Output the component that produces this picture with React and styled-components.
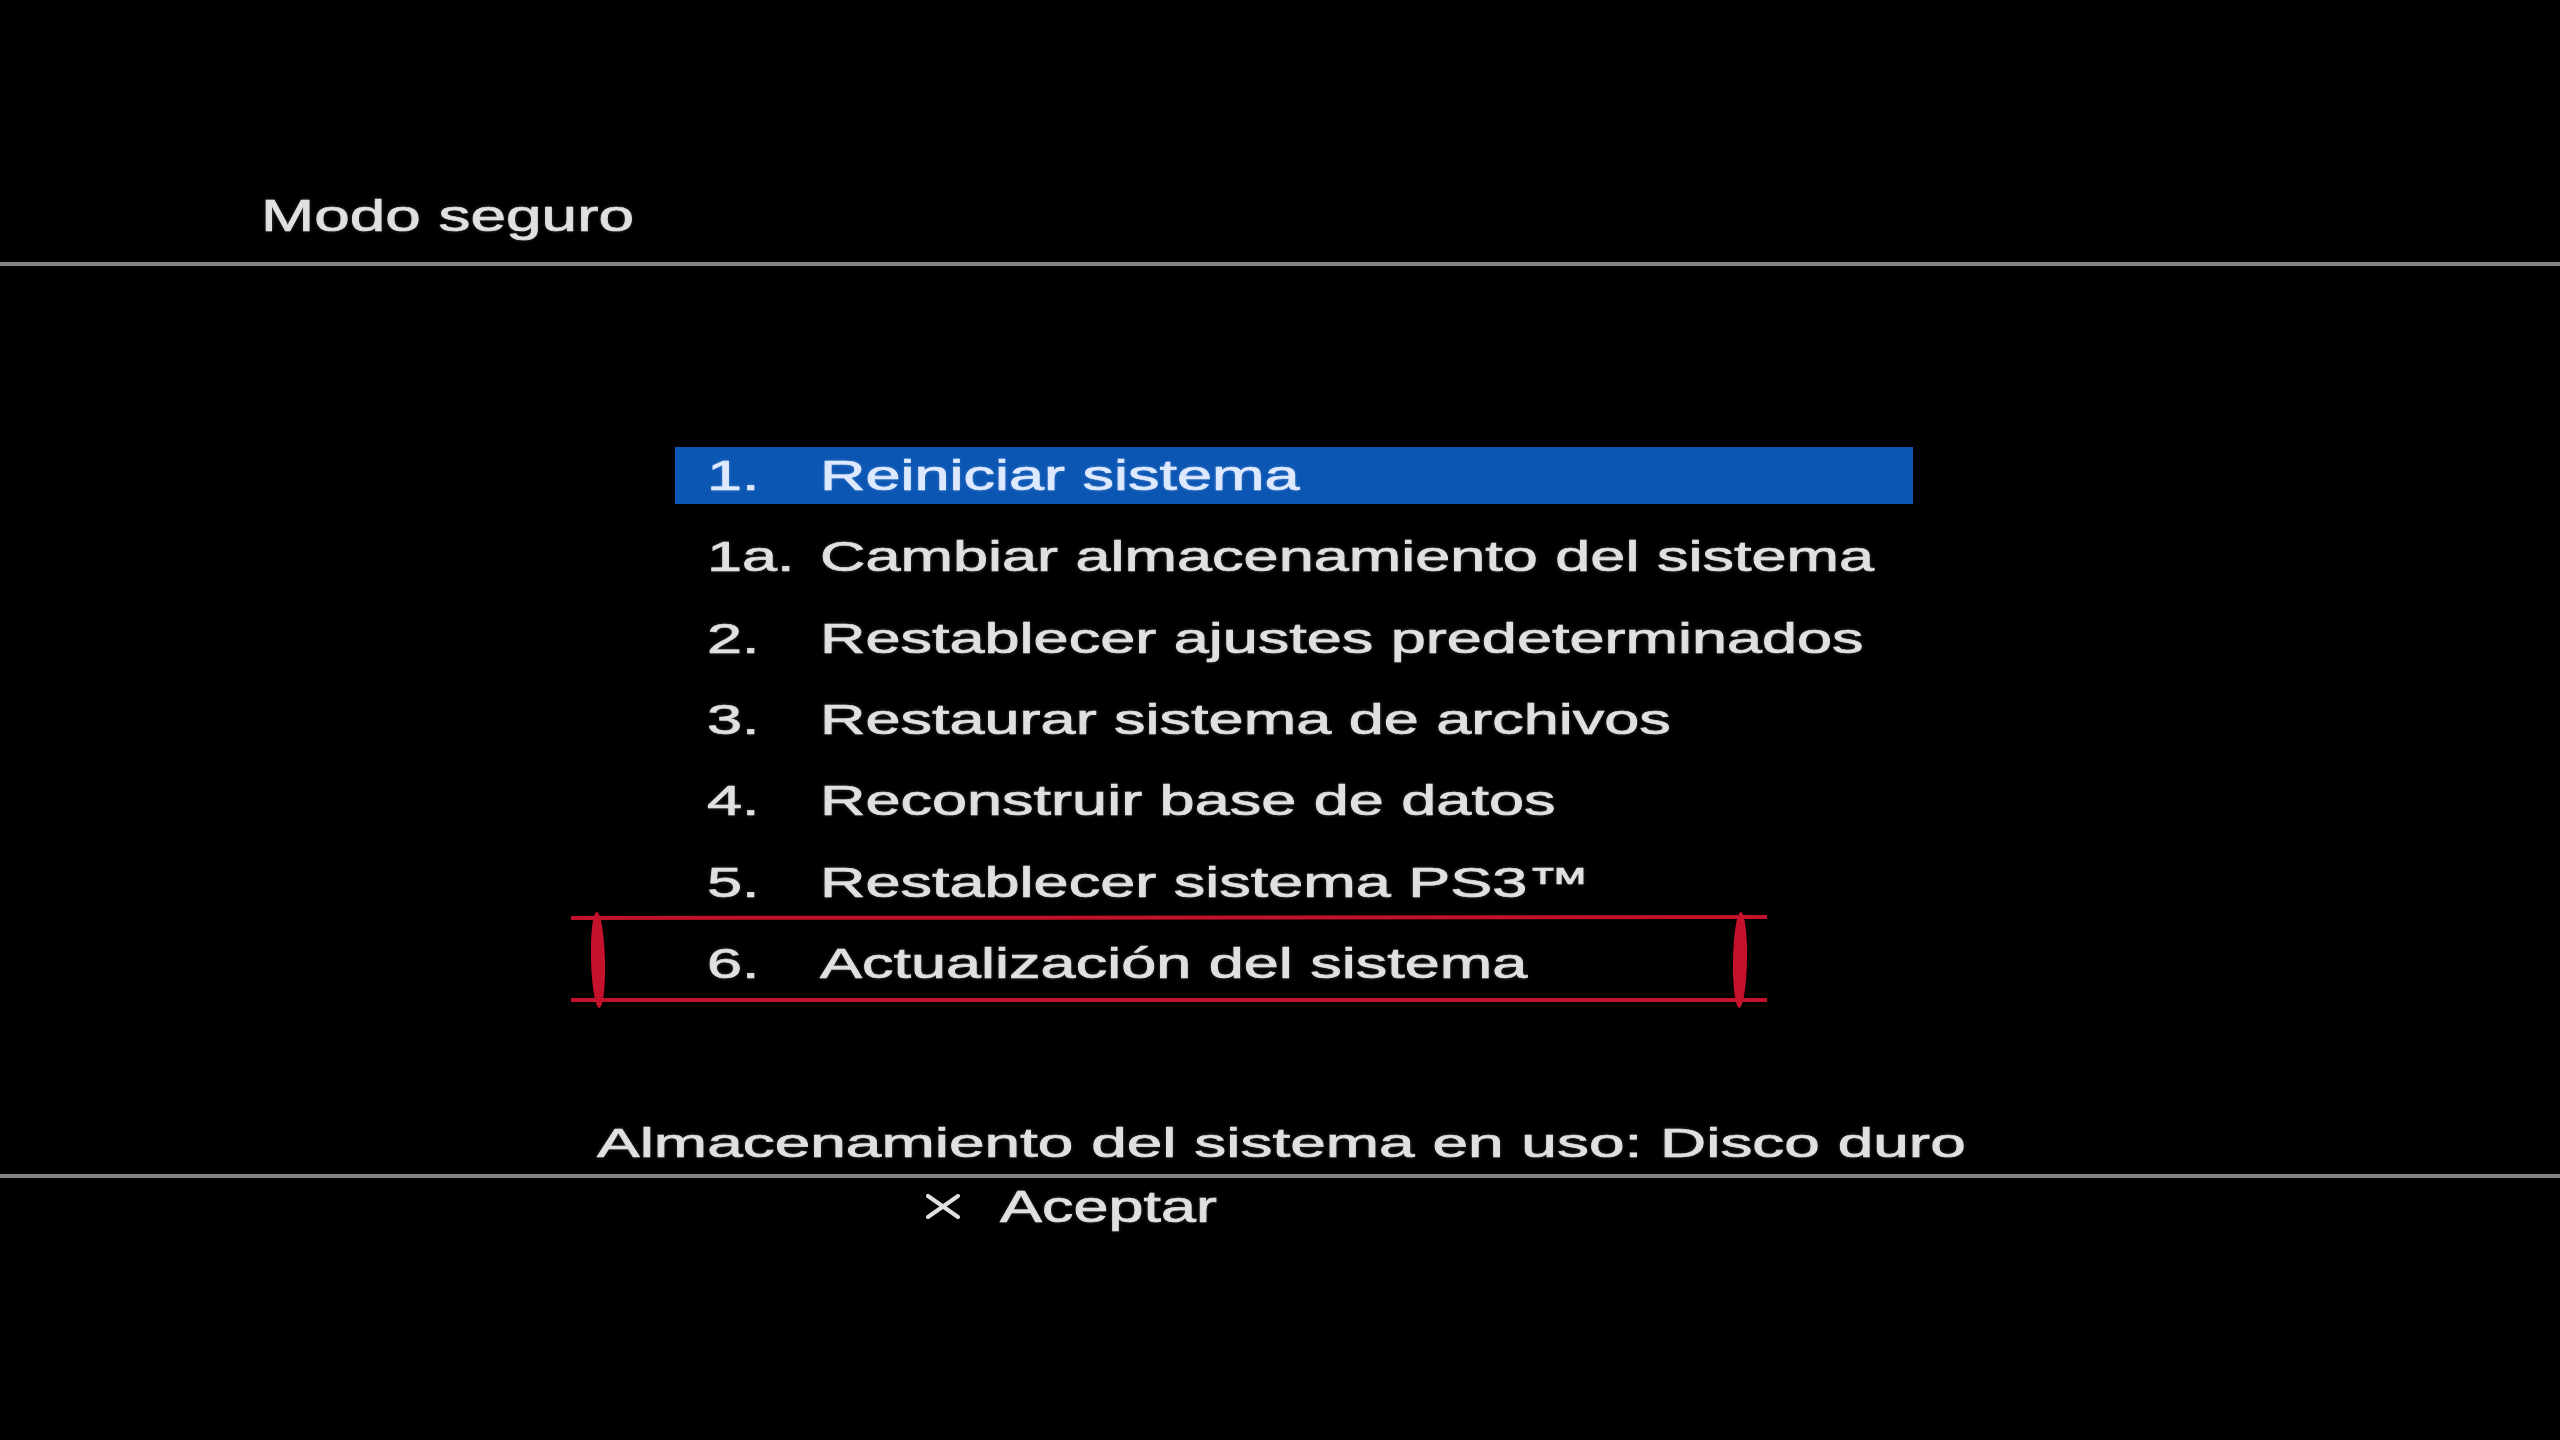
import styled, { createGlobalStyle } from 'styled-components';

const GlobalStyle = createGlobalStyle`
  html, body {
    margin: 0;
    background: #000;
  }
  body {
    font-family: 'Liberation Sans', Arial, sans-serif;
  }
`;

const items = [
  { num: '1.', label: 'Reiniciar sistema', active: true },
  { num: '1a.', label: 'Cambiar almacenamiento del sistema' },
  { num: '2.', label: 'Restablecer ajustes predeterminados' },
  { num: '3.', label: 'Restaurar sistema de archivos' },
  { num: '4.', label: 'Reconstruir base de datos' },
  { num: '5.', label: 'Restablecer sistema PS3™' },
  { num: '6.', label: 'Actualización del sistema', marked: true },
];

const App = () => {
  return (
    <>
      <GlobalStyle />
      <Screen>
        <Header>
          <Stretch $sx={1.42}>Modo seguro</Stretch>
        </Header>
        <Rule />
        <Menu>
          {items.map((item) => (
            <Row key={item.num} $active={item.active}>
              <Num>
                <Stretch $sx={1.5}>{item.num}</Stretch>
              </Num>
              <Stretch $sx={1.5}>{item.label}</Stretch>
              {item.marked && (
                <Mark width="1200" height="100" viewBox="0 0 1200 100">
                  <line x1="2" y1="7" x2="1198" y2="6" stroke="#c4122c" strokeWidth="4" />
                  <line x1="2" y1="89" x2="1198" y2="89" stroke="#c4122c" strokeWidth="4" />
                  <ellipse cx="29" cy="49" rx="7" ry="48" fill="#c4122c" transform="rotate(-1.5 29 49)" />
                  <ellipse cx="1171" cy="49" rx="7" ry="48" fill="#c4122c" transform="rotate(1 1171 49)" />
                </Mark>
              )}
            </Row>
          ))}
        </Menu>
        <Status>
          <Stretch $sx={1.56}>Almacenamiento del sistema en uso: Disco duro</Stretch>
        </Status>
        <Rule $gap={6} />
        <Footer>
          <svg width="36" height="25" viewBox="0 0 36 25">
            <line x1="3" y1="2" x2="33" y2="23" stroke="#e0e0e0" strokeWidth="4" strokeLinecap="round" />
            <line x1="33" y1="2" x2="3" y2="23" stroke="#e0e0e0" strokeWidth="4" strokeLinecap="round" />
          </svg>
          <Stretch $sx={1.43}>Aceptar</Stretch>
        </Footer>
      </Screen>
    </>
  );
};

const Screen = styled.div`
  width: 2560px;
  height: 1440px;
  background: #000;
  display: flex;
  flex-direction: column;
  overflow: hidden;
  color: #e0e0e0;
  -webkit-text-stroke: 0.7px currentColor;
  text-shadow: 0 0 3px rgba(255, 255, 255, 0.3);
`;

const Stretch = styled.span`
  display: inline-block;
  white-space: nowrap;
  transform: scaleX(${(p) => p.$sx});
  transform-origin: left center;
`;

const Header = styled.div`
  padding: 186px 0 0 261px;
  height: 60px;
  line-height: 60px;
  font-size: 45px;
  margin-bottom: 16px;
`;

const Rule = styled.div`
  height: 4px;
  background: #858585;
  margin-top: ${(p) => p.$gap || 0}px;
  flex: none;
`;

const Menu = styled.div`
  margin: 181px 0 0 675px;
  width: 1238px;
  display: flex;
  flex-direction: column;
  gap: 24.33px;
`;

const Row = styled.div`
  position: relative;
  height: 57px;
  display: flex;
  align-items: center;
  padding-left: 32px;
  font-size: 42px;
  line-height: 57px;
  background: ${(p) => (p.$active ? '#0b56b3' : 'transparent')};
  color: ${(p) => (p.$active ? '#dde9ff' : '#e0e0e0')};
`;

const Num = styled.div`
  width: 113px;
  flex: none;
`;

const Mark = styled.svg`
  position: absolute;
  left: -106px;
  top: -24px;
  pointer-events: none;
`;

const Status = styled.div`
  margin: 126px 0 0 597px;
  font-size: 41px;
  line-height: 50px;
`;

const Footer = styled.div`
  margin: 4px 0 0 925px;
  display: flex;
  align-items: center;
  gap: 39px;
  font-size: 44px;
  line-height: 50px;
`;

export default App;
